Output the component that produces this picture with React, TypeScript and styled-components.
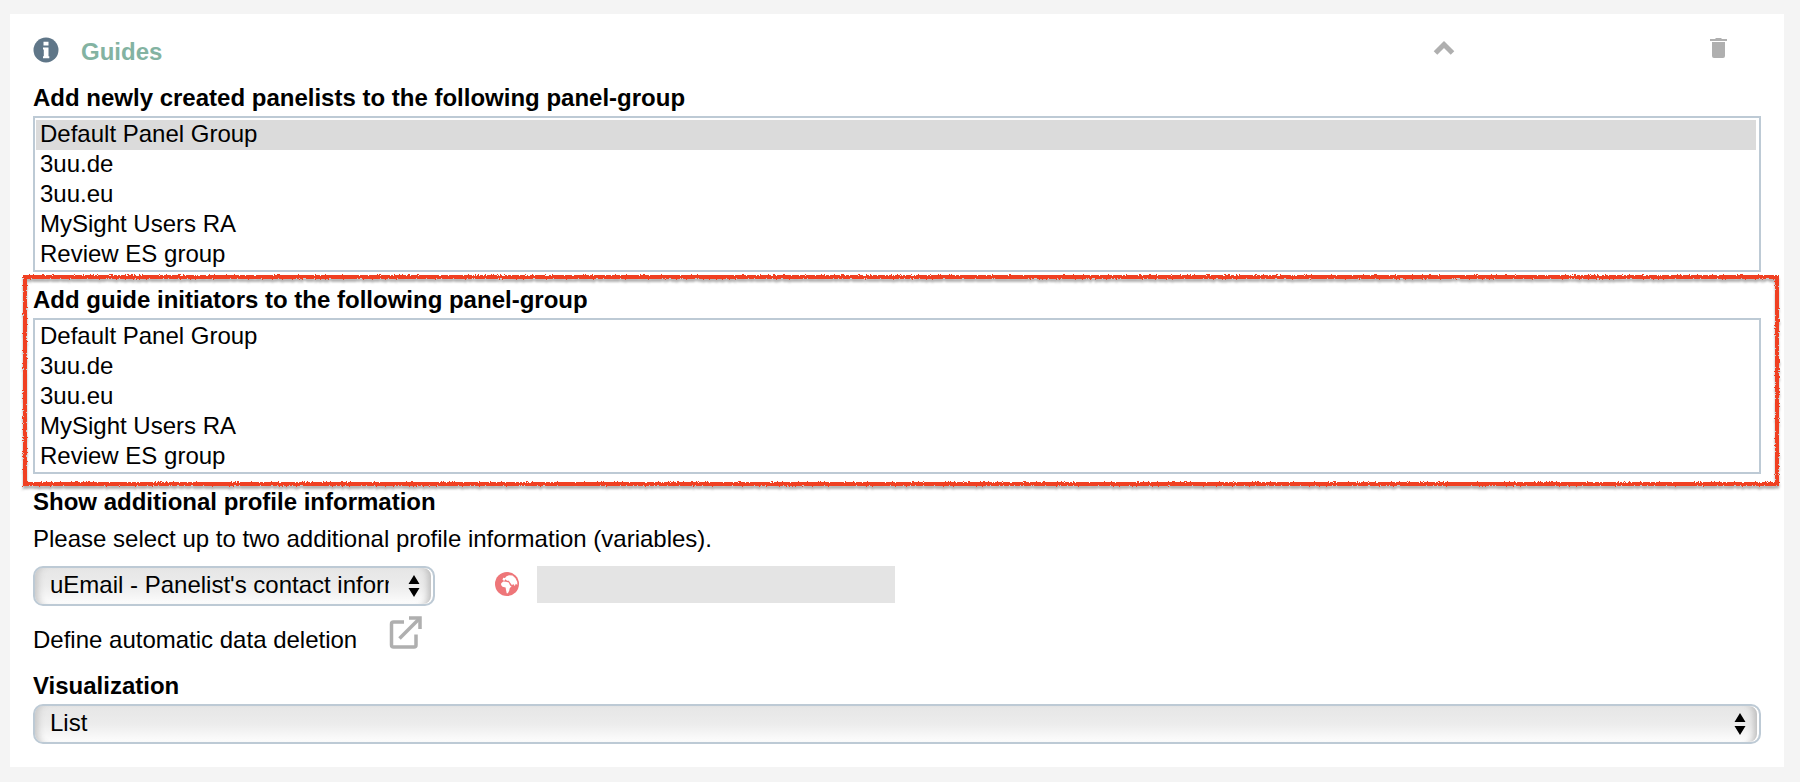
import React from "react";
import styled, { createGlobalStyle } from "styled-components";

const GlobalStyle = createGlobalStyle`
  *, *::before, *::after { box-sizing: border-box; }
  body {
    margin: 0;
    background: #f4f4f4;
    color: #000;
    font: 24px/30px "Liberation Sans", Arial, Helvetica, sans-serif;
  }
`;

const Page = styled.main`
  padding: 14px 16px 15px 10px;
`;

const Card = styled.section`
  background: #fff;
  padding: 22px 23px 23px;
`;

const Header = styled.header`
  display: flex;
  align-items: center;
  height: 28px;
  margin-bottom: 18px;
  padding-right: 34px;
`;

const Title = styled.h2`
  flex: 1;
  margin: 0 0 0 22px;
  padding-top: 4px;
  font-size: 24px;
  color: #83b3a2;
`;

const IconButton = styled.button<{ $gap?: number }>`
  display: flex;
  align-items: center;
  justify-content: center;
  padding: 0;
  margin: 0 ${(p) => p.$gap ?? 0}px 4px 0;
  border: 0;
  background: none;
  color: #afafaf;
  cursor: pointer;
`;

const Group = styled.div`
  margin-bottom: 12px;
`;

const Highlight = styled.div`
  position: relative;
  margin-bottom: 12px;
`;

const Marker = styled.svg`
  position: absolute;
  top: -7px;
  left: -8px;
  width: calc(100% + 24px);
  height: calc(100% + 17px);
  overflow: visible;
  pointer-events: none;
  filter: drop-shadow(0 3px 1px rgba(0, 0, 0, 0.3));
`;

const Label = styled.label`
  display: block;
  height: 34px;
  line-height: 32px;
  font-weight: bold;
`;

const Heading = styled.h3`
  margin: 0;
  font-size: 24px;
  line-height: 32px;
`;

const ListBox = styled.select`
  display: block;
  width: 100%;
  height: 156px;
  padding: 2px 3px 2px 1px;
  border: 2px solid #bdcad5;
  border-radius: 0;
  background: #fff;
  color: #000;
  font: inherit;
  outline: 0;
  overflow: hidden;
  scrollbar-width: none;

  option {
    height: 30px;
    padding: 0 4px;
    line-height: 30px;
    color: #000;
  }

  option:checked {
    background: #dbdbdb linear-gradient(#dbdbdb, #dbdbdb);
    color: #000;
  }
`;

const Hint = styled.p`
  margin: 6px 0 12px;
`;

const DropDownFrame = styled.div<{ $width: string }>`
  position: relative;
  width: ${(p) => p.$width};
`;

const DropDownSelect = styled.select`
  display: block;
  width: 100%;
  height: 40px;
  padding: 0 44px 2px 15px;
  border: 2px solid #bdcad5;
  border-radius: 10px;
  appearance: none;
  background: linear-gradient(#e6e6e6, #ececec 50%, #fdfdfd);
  box-shadow: inset -2px 0 0 #fff, inset 9px 0 7px -6px #c6c6c6, inset -11px 0 7px -6px #bbb;
  color: #000;
  font: inherit;
  text-overflow: clip;
`;

const Arrows = styled.svg`
  position: absolute;
  top: 9px;
  right: 15px;
  pointer-events: none;
`;

const ProfileRow = styled.div`
  display: flex;
  align-items: flex-start;
`;

const Globe = styled.svg`
  flex: none;
  margin: 6px 18px 0 60px;
`;

const VariableInput = styled.input`
  width: 358px;
  height: 37px;
  padding: 0 8px;
  border: 0;
  background: #e4e4e4;
  font: inherit;
`;

const DeletionRow = styled.div`
  display: flex;
  align-items: flex-start;
  height: 46px;
  margin: 6px 0 12px;

  span {
    padding-top: 13px;
    margin-right: 32px;
  }
`;

const OpenLink = styled.a`
  display: flex;
  padding-top: 4px;
  color: #afafaf;
`;

const groups = ["Default Panel Group", "3uu.de", "3uu.eu", "MySight Users RA", "Review ES group"];

function GroupList({ id, label, value }: { id: string; label: string; value?: string }) {
  return (
    <>
      <Label htmlFor={id}>{label}</Label>
      <ListBox id={id} multiple size={5} defaultValue={value ? [value] : []}>
        {groups.map((g) => (
          <option key={g}>{g}</option>
        ))}
      </ListBox>
    </>
  );
}

function DropDown({ id, width, option, name }: { id: string; width: string; option: string; name?: string }) {
  return (
    <DropDownFrame $width={width}>
      <DropDownSelect id={id} aria-label={name}>
        <option>{option}</option>
      </DropDownSelect>
      <Arrows width="12" height="22" viewBox="0 0 12 22" aria-hidden="true">
        <path d="M6 0 11.5 9H.5ZM6 22 11.5 13H.5Z" />
      </Arrows>
    </DropDownFrame>
  );
}

export default function App() {
  return (
    <>
      <GlobalStyle />
      <Page>
        <Card>
          <Header>
            <svg width="26" height="26" viewBox="0 0 26 26" aria-hidden="true">
              <circle cx="13" cy="13" r="12.5" fill="#5f7688" />
              <path d="M10.500 4.800h5v3.700h-5ZM10 10.500h5.500v8.700h.8v2H10v-2h.8v-6.700H10Z" fill="#fff" />
            </svg>
            <Title>Guides</Title>
            <IconButton type="button" aria-label="Collapse" $gap={255}>
              <svg width="22" height="16" viewBox="0 0 22 16" fill="none" stroke="currentColor" strokeWidth="5">
                <path d="M2.500 13 11 4.500 19.500 13" />
              </svg>
            </IconButton>
            <IconButton type="button" aria-label="Delete">
              <svg width="17" height="20" viewBox="0 0 17 20" fill="currentColor">
                <path d="M0 1h5l1-1h5l1 1h5v2H0ZM2 4h13v14q0 2-2 2H4q-2 0-2-2Z" />
              </svg>
            </IconButton>
          </Header>

          <Group>
            <GroupList
              id="panelists"
              label="Add newly created panelists to the following panel-group"
              value="Default Panel Group"
            />
          </Group>

          <Highlight>
            <GroupList id="initiators" label="Add guide initiators to the following panel-group" />
            <Marker aria-hidden="true">
              <defs>
                <filter id="chalk" filterUnits="userSpaceOnUse" x="-10" y="-10" width="110%" height="120%">
                  <feTurbulence type="fractalNoise" baseFrequency="0.7" numOctaves="2" seed="4" />
                  <feDisplacementMap in="SourceGraphic" scale="3" xChannelSelector="R" yChannelSelector="G" />
                </filter>
              </defs>
              <rect width="100%" height="100%" fill="none" stroke="#f03f24" strokeWidth="4" filter="url(#chalk)" />
            </Marker>
          </Highlight>

          <Heading>Show additional profile information</Heading>
          <Hint>Please select up to two additional profile information (variables).</Hint>
          <ProfileRow>
            <DropDown
              id="profile"
              width="402px"
              name="Additional profile information"
              option="uEmail - Panelist's contact information"
            />
            <Globe width="24" height="24" viewBox="0 0 24 24" aria-hidden="true">
              <circle cx="12" cy="12" r="12" fill="#ee7679" />
              <g fill="#fff">
                <path d="M7.500 7.800 8.200 5.800 10 6 11.500 4.200 14 3.300 17.500 3.600 20.500 6.300 22.300 10 22.300 13 20.800 11.800 19.800 14 18.200 12 17 13.300 14.800 10.200 13.800 8.800 12 8.800 10.500 7.300 9.200 8.900Z" />
                <path d="M6.200 11.200 8.200 9.500 11 9.700 13.800 10.500 15.200 13.700 16.600 14 14.600 16.500 14.300 18.500 12.900 21.300 11.700 21.300 11 18 10.600 15.500 7.500 14.800 6.100 13Z" />
              </g>
            </Globe>
            <VariableInput aria-label="Variable label" />
          </ProfileRow>

          <DeletionRow>
            <span>Define automatic data deletion</span>
            <OpenLink href="#deletion" aria-label="Open data deletion settings">
              <svg width="33" height="33" viewBox="0 0 33 33" fill="none" stroke="currentColor">
                <path d="M15 6H4.500Q2.500 6 2.500 8V29Q2.500 31 4.500 31H25Q27 31 27 29V18.500" strokeWidth="3.500" />
                <path d="M10.500 22.500 30 3" strokeWidth="3.500" />
                <path d="M20 2H31V13" strokeWidth="3.500" />
              </svg>
            </OpenLink>
          </DeletionRow>

          <Label htmlFor="visualization">Visualization</Label>
          <DropDown id="visualization" width="100%" option="List" />
        </Card>
      </Page>
    </>
  );
}
